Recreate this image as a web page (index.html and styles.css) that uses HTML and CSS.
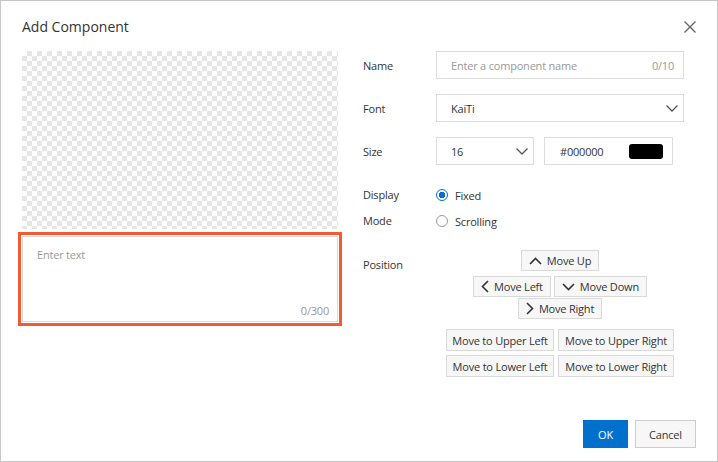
FILE: index.html
```html
<!DOCTYPE html>
<html lang="en">
<head>
<meta charset="utf-8">
<title>Add Component</title>
<link rel="stylesheet" href="styles.css">
</head>
<body>
<div class="dialog">
  <header class="dlg-head">
    <h1 class="dlg-title">Add Component</h1>
    <button class="close" aria-label="Close">
      <svg width="12" height="12" viewBox="0 0 12 12"><path d="M0.5 0.5 L11.5 11.5 M11.5 0.5 L0.5 11.5" stroke="#666" stroke-width="1.4" fill="none"/></svg>
    </button>
  </header>
  <div class="dlg-body">
    <div class="left">
      <div class="preview"></div>
      <div class="textarea">
        <span class="ph">Enter text</span>
        <span class="count">0/300</span>
      </div>
    </div>
    <div class="form">
      <div class="row">
        <div class="lbl">Name</div>
        <div class="field wide">
          <span class="ph">Enter a component name</span>
          <span class="ph">0/10</span>
        </div>
      </div>
      <div class="row">
        <div class="lbl">Font</div>
        <div class="field wide select">
          <span>KaiTi</span>
          <svg class="chev" width="12" height="7" viewBox="0 0 12 7"><path d="M0.5 0.5 L6 6 L11.5 0.5" stroke="#555" stroke-width="1.3" fill="none"/></svg>
        </div>
      </div>
      <div class="row">
        <div class="lbl">Size</div>
        <div class="field size select">
          <span>16</span>
          <svg class="chev" width="12" height="7" viewBox="0 0 12 7"><path d="M0.5 0.5 L6 6 L11.5 0.5" stroke="#555" stroke-width="1.3" fill="none"/></svg>
        </div>
        <div class="field color">
          <span>#000000</span>
          <span class="swatch"></span>
        </div>
      </div>
      <div class="row top radios-row">
        <div class="lbl lbl-tall">Display<br>Mode</div>
        <div class="radios">
          <label class="radio"><span class="dot checked"></span>Fixed</label>
          <label class="radio"><span class="dot"></span>Scrolling</label>
        </div>
      </div>
      <div class="row top pos-row">
        <div class="lbl lbl-pos">Position</div>
        <div class="pad">
          <div class="pad-line l1">
            <button class="btn"><svg width="13" height="8" viewBox="0 0 13 8"><path d="M1 7 L6.5 1.5 L12 7" stroke="#333" stroke-width="1.6" fill="none"/></svg>Move Up</button>
          </div>
          <div class="pad-line l2">
            <button class="btn"><svg width="8" height="13" viewBox="0 0 8 13"><path d="M7 1 L1.5 6.5 L7 12" stroke="#333" stroke-width="1.6" fill="none"/></svg>Move Left</button>
            <button class="btn"><svg width="13" height="8" viewBox="0 0 13 8"><path d="M1 1 L6.5 6.5 L12 1" stroke="#333" stroke-width="1.6" fill="none"/></svg>Move Down</button>
          </div>
          <div class="pad-line l3">
            <button class="btn"><svg width="8" height="13" viewBox="0 0 8 13"><path d="M1 1 L6.5 6.5 L1 12" stroke="#333" stroke-width="1.6" fill="none"/></svg>Move Right</button>
          </div>
          <div class="corners">
            <button class="btn">Move to Upper Left</button>
            <button class="btn">Move to Upper Right</button>
            <button class="btn">Move to Lower Left</button>
            <button class="btn">Move to Lower Right</button>
          </div>
        </div>
      </div>
    </div>
  </div>
  <footer class="dlg-foot">
    <button class="fbtn ok">OK</button>
    <button class="fbtn cancel">Cancel</button>
  </footer>
</div>
</body>
</html>
```

FILE: styles.css
```css
* { box-sizing: border-box; }
html, body { margin: 0; padding: 0; background: #fff; }
body {
  font-family: "Open Sans", "Noto Sans", "Liberation Sans", sans-serif;
  font-size: 11px;
  letter-spacing: -0.2px;
  color: #333;
}
button { font-family: inherit; letter-spacing: inherit; }

.dialog {
  width: 718px;
  height: 462px;
  border: 1px solid #c6c6c6;
  display: flex;
  flex-direction: column;
  background: #fff;
}

.dlg-head {
  height: 50px;
  display: flex;
  align-items: center;
  justify-content: space-between;
  padding: 2px 21px 0 21px;
}
.dlg-title {
  margin: 0;
  font-size: 14px;
  font-weight: 400;
  letter-spacing: 0;
  color: #333;
  line-height: 20px;
}
.close {
  border: 0;
  background: none;
  padding: 0;
  width: 12px;
  height: 12px;
  display: flex;
}

.dlg-body {
  display: flex;
  padding-left: 21px;
  gap: 25px;
}

.left { width: 316px; }
.preview {
  height: 178px;
  background-color: #fff;
  background-image:
    linear-gradient(45deg, #e6e6e6 25%, transparent 25%, transparent 75%, #e6e6e6 75%),
    linear-gradient(45deg, #e6e6e6 25%, transparent 25%, transparent 75%, #e6e6e6 75%);
  background-size: 10px 10px;
  background-position: 0 0, 5px 5px;
}
.textarea {
  position: relative;
  margin-top: 7px;
  height: 86px;
  border: 1px solid #d9d9d9;
  padding: 10px 14px;
  line-height: 16px;
  outline: 3px solid #f25a35;
  outline-offset: 1px;
}
.ph { color: #999; }
.count {
  position: absolute;
  right: 8px;
  bottom: 2px;
  color: #999;
}

.form { width: 321px; }
.row {
  display: flex;
  align-items: center;
  margin-bottom: 15px;
}
.row.top { align-items: flex-start; }
.lbl { width: 73px; flex: none; color: #333; }

.field {
  height: 28px;
  border: 1px solid #dcdcdc;
  display: flex;
  align-items: center;
  justify-content: space-between;
  padding: 0 9px 0 14px;
}
.field.wide { width: 248px; }
.field.select { padding-right: 5px; }
.field.size { width: 98px; }
.field.color {
  width: 129px;
  margin-left: 10px;
  padding: 0 9px 0 15px;
}
.chev { display: block; }
.swatch {
  width: 34px;
  height: 15px;
  background: #000;
  border-radius: 3px;
}

.radios-row { margin-top: 17px; margin-bottom: 16px; }
.lbl-tall { line-height: 26px; }
.radios { display: flex; flex-direction: column; }
.radio {
  display: flex;
  align-items: center;
  height: 26px;
}
.dot {
  width: 12px;
  height: 12px;
  border-radius: 50%;
  border: 1px solid #9a9a9a;
  margin-right: 7px;
  background: #fff;
}
.dot.checked {
  border-color: #0070cc;
  background: radial-gradient(circle, #0070cc 0 3px, #fff 3.5px);
}

.lbl-pos { padding-top: 4px; line-height: 21px; }
.pad {
  width: 248px;
  display: flex;
  flex-direction: column;
  align-items: center;
}
.pad-line { display: flex; gap: 3px; }
.pad-line.l1 { margin-bottom: 5px; }
.pad-line.l2 { margin-bottom: 1px; }
.corners {
  margin-top: 10px;
  display: grid;
  grid-template-columns: 108px 116px;
  gap: 4px;
}
.btn {
  height: 21px;
  border: 1px solid #d9d9d9;
  background: #f7f7f7;
  color: #333;
  font-size: 11px;
  padding: 0 7px;
  display: flex;
  align-items: center;
  justify-content: center;
  gap: 5px;
  white-space: nowrap;
}
.corners .btn { padding: 0; height: 22px; }

.dlg-foot {
  margin-top: auto;
  display: flex;
  justify-content: flex-end;
  gap: 7px;
  padding: 0 21px 13px 0;
}
.fbtn {
  height: 28px;
  font-size: 11px;
  border: 1px solid #ccc;
  background: #f7f7f7;
  color: #333;
  padding: 0;
}
.fbtn.ok { width: 45px; background: #0070cc; border-color: #0070cc; color: #fff; }
.fbtn.cancel { width: 61px; }
```
